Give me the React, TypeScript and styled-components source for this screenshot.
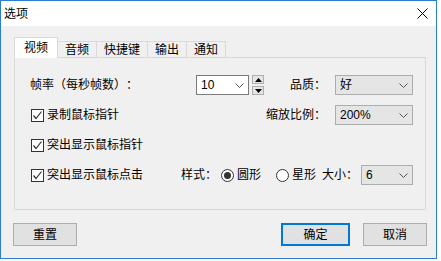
import React from 'react';
import styled, { createGlobalStyle } from 'styled-components';

const GlobalStyle = createGlobalStyle`
  html, body {
    margin: 0;
    padding: 0;
    background: #ffffff;
  }
  body {
    font-family: "Liberation Sans", "Noto Sans CJK SC", sans-serif;
    font-size: 12px;
    color: #000;
    text-spacing-trim: space-all;
  }
`;

const Window = styled.div`
  box-sizing: border-box;
  width: 437px;
  height: 259px;
  border: 1px solid #2b7cd3;
  background: #f0f0f0;
  display: flex;
  flex-direction: column;
`;

const TitleBar = styled.div`
  height: 25px;
  background: #fff;
  display: flex;
  align-items: center;
  justify-content: space-between;
  padding: 0 8px 0 3px;
  font-size: 12px;
  line-height: 14px;
`;

const Body = styled.div`
  flex: 1;
  display: flex;
  flex-direction: column;
  padding: 11px 10px 0 13px;
`;

const TabStrip = styled.div`
  display: flex;
  align-items: flex-end;
  height: 21px;
  margin-bottom: -1px;
  position: relative;
  z-index: 1;
`;

const Tab = styled.div<{ $active?: boolean }>`
  box-sizing: border-box;
  height: ${(p) => (p.$active ? '21px' : '17px')};
  padding: ${(p) => (p.$active ? '3px 9px 0' : '1px 7px 0')};
  background: ${(p) => (p.$active ? '#ffffff' : '#f0f0f0')};
  border: 1px solid #d9d9d9;
  border-bottom: ${(p) => (p.$active ? 'none' : '1px solid #d9d9d9')};
  border-left: ${(p) => (p.$active ? '1px solid #d9d9d9' : 'none')};
  line-height: 14px;
  white-space: nowrap;
`;

const Panel = styled.div`
  box-sizing: border-box;
  height: 153px;
  border: 1px solid #d9d9d9;
  background: #f0f0f0;
  padding: 17px 12px 0 15px;
  display: flex;
  flex-direction: column;
  gap: 10px;
`;

const Row = styled.div`
  height: 20px;
  display: flex;
  align-items: center;
  line-height: 14px;
  white-space: nowrap;
`;

const FieldLabel = styled.div<{ $w: number }>`
  width: ${(p) => p.$w}px;
  flex: none;
`;

const RightLabel = styled.div`
  flex: 1;
  text-align: right;
  padding-right: 9px;
`;

const Combo = styled.div<{ $w: number; $editable?: boolean }>`
  box-sizing: border-box;
  width: ${(p) => p.$w}px;
  height: 20px;
  flex: none;
  border: 1px solid ${(p) => (p.$editable ? '#7a7a7a' : '#adadad')};
  background: ${(p) => (p.$editable ? '#ffffff' : '#e5e5e5')};
  display: flex;
  align-items: center;
  justify-content: space-between;
  padding: 0 4px 0 4px;
`;

const Spin = styled.div`
  display: flex;
  flex-direction: column;
  gap: 2px;
  margin-left: 3px;
`;

const SpinButton = styled.div`
  box-sizing: border-box;
  width: 12px;
  height: 9px;
  border: 1px solid #adadad;
  background: #e5e5e5;
  display: flex;
  align-items: center;
  justify-content: center;
`;

const CheckLabel = styled.label<{ $w?: number }>`
  display: flex;
  align-items: center;
  gap: 3px;
  padding-left: 1px;
  ${(p) => (p.$w ? `width: ${p.$w}px; flex: none;` : '')}
`;

const Box = styled.span`
  box-sizing: border-box;
  width: 13px;
  height: 13px;
  border: 1px solid #333;
  background: #fff;
  display: flex;
  align-items: center;
  justify-content: center;
`;

const RadioLabel = styled.span<{ $ml: number }>`
  display: flex;
  align-items: center;
  gap: 3px;
  margin-left: ${(p) => p.$ml}px;
`;

const RadioDot = styled.span<{ $on?: boolean }>`
  box-sizing: border-box;
  width: 13px;
  height: 13px;
  border-radius: 50%;
  border: 1px solid #333;
  background: #fff;
  display: flex;
  align-items: center;
  justify-content: center;
  &::after {
    content: '';
    width: 7px;
    height: 7px;
    border-radius: 50%;
    background: ${(p) => (p.$on ? '#333' : 'transparent')};
  }
`;

const Small = styled.span<{ $ml: number }>`
  margin-left: ${(p) => p.$ml}px;
`;

const Footer = styled.div`
  display: flex;
  margin-top: 13px;
`;

const Button = styled.div<{ $w: number; $primary?: boolean }>`
  box-sizing: border-box;
  width: ${(p) => p.$w}px;
  height: 23px;
  background: #e1e1e1;
  border: ${(p) => (p.$primary ? '2px solid #0078d7' : '1px solid #adadad')};
  display: flex;
  align-items: center;
  justify-content: center;
  line-height: 14px;
`;

const Spacer = styled.div`
  flex: 1;
`;

const Chevron = () => (
  <svg width="9" height="5" viewBox="0 0 9 5">
    <path d="M0.5 0.5 L4.5 4.5 L8.5 0.5" fill="none" stroke="#555" strokeWidth="1" />
  </svg>
);

const Check = () => (
  <svg width="11" height="11" viewBox="0 0 11 11">
    <path d="M1.5 5.5 L4 8.5 L9.5 1.5" fill="none" stroke="#333" strokeWidth="1.2" />
  </svg>
);

const Tri = ({ up }: { up?: boolean }) => (
  <svg width="7" height="4" viewBox="0 0 7 4">
    <path d={up ? 'M0 4 L3.5 0 L7 4 Z' : 'M0 0 L3.5 4 L7 0 Z'} fill="#000" />
  </svg>
);

const CloseIcon = () => (
  <svg width="11" height="11" viewBox="0 0 11 11">
    <path d="M0.5 0.5 L10.5 10.5 M10.5 0.5 L0.5 10.5" stroke="#000" strokeWidth="1" />
  </svg>
);

const tabs = ['视频', '音频', '快捷键', '输出', '通知'];

function CheckItem({ text, w }: { text: string; w?: number }) {
  return (
    <CheckLabel $w={w}>
      <Box>
        <Check />
      </Box>
      <span>{text}</span>
    </CheckLabel>
  );
}

export default function App() {
  return (
    <>
      <GlobalStyle />
      <Window>
        <TitleBar>
          <span>选项</span>
          <CloseIcon />
        </TitleBar>
        <Body>
          <TabStrip>
            {tabs.map((t, i) => (
              <Tab key={t} $active={i === 0}>
                {t}
              </Tab>
            ))}
          </TabStrip>
          <Panel>
            <Row>
              <FieldLabel $w={166}>帧率（每秒帧数）：</FieldLabel>
              <Combo $w={53} $editable>
                <span>10</span>
                <Chevron />
              </Combo>
              <Spin>
                <SpinButton>
                  <Tri up />
                </SpinButton>
                <SpinButton>
                  <Tri />
                </SpinButton>
              </Spin>
              <RightLabel>品质：</RightLabel>
              <Combo $w={78}>
                <span>好</span>
                <Chevron />
              </Combo>
            </Row>
            <Row>
              <CheckItem text="录制鼠标指针" />
              <RightLabel>缩放比例：</RightLabel>
              <Combo $w={78}>
                <span>200%</span>
                <Chevron />
              </Combo>
            </Row>
            <Row>
              <CheckItem text="突出显示鼠标指针" />
            </Row>
            <Row>
              <CheckItem text="突出显示鼠标点击" w={150} />
              <span>样式：</span>
              <RadioLabel $ml={4}>
                <RadioDot $on />
                <span>圆形</span>
              </RadioLabel>
              <RadioLabel $ml={15}>
                <RadioDot />
                <span>星形</span>
              </RadioLabel>
              <Small $ml={6}>大小：</Small>
              <Spacer />
              <Combo $w={52}>
                <span>6</span>
                <Chevron />
              </Combo>
            </Row>
          </Panel>
          <Footer>
            <Button $w={64} style={{ marginLeft: -1 }}>
              重置
            </Button>
            <Spacer />
            <Button $w={69} $primary>
              确定
            </Button>
            <Button $w={64} style={{ marginLeft: 13, marginRight: -1 }}>
              取消
            </Button>
          </Footer>
        </Body>
      </Window>
    </>
  );
}
